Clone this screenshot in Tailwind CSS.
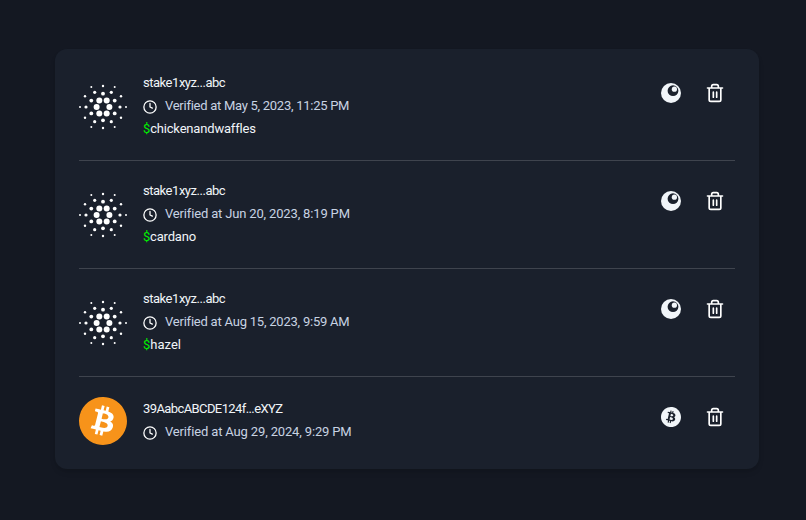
<!doctype html>
<html>
<head>
<meta charset="utf-8">
<script src="https://cdn.jsdelivr.net/npm/@tailwindcss/browser@4"></script>
</head>
<body class="m-0 h-[520px] w-[806px] overflow-hidden bg-[#141822] font-['Roboto',sans-serif]">
<svg width="0" height="0" class="absolute">
  <defs>
    <g id="ada" fill="#fff">
      <circle cx="20.3" cy="17.6" r="3"/><circle cx="27.7" cy="17.6" r="3"/><circle cx="17.6" cy="24" r="3"/><circle cx="30.4" cy="24" r="3"/><circle cx="20.3" cy="30.4" r="3"/><circle cx="27.7" cy="30.4" r="3"/>
      <circle cx="24" cy="10.7" r="1.9"/><circle cx="24" cy="37.3" r="1.9"/><circle cx="12.3" cy="17.6" r="1.9"/><circle cx="35.7" cy="17.6" r="1.9"/><circle cx="12.3" cy="30.4" r="1.9"/><circle cx="35.7" cy="30.4" r="1.9"/>
      <circle cx="7" cy="24" r="1.6"/><circle cx="41" cy="24" r="1.6"/><circle cx="15.7" cy="9.3" r="1.6"/><circle cx="32.3" cy="9.3" r="1.6"/><circle cx="15.7" cy="38.7" r="1.6"/><circle cx="32.3" cy="38.7" r="1.6"/>
      <circle cx="24" cy="3" r="1.2"/><circle cx="24" cy="45" r="1.2"/><circle cx="6" cy="13.3" r="1.2"/><circle cx="42" cy="13.3" r="1.2"/><circle cx="6" cy="34.7" r="1.2"/><circle cx="42" cy="34.7" r="1.2"/>
      <circle cx="1" cy="24" r="1"/><circle cx="47" cy="24" r="1"/><circle cx="12.3" cy="4" r="1"/><circle cx="35.7" cy="4" r="1"/><circle cx="12.3" cy="44" r="1"/><circle cx="35.7" cy="44" r="1"/>
    </g>
    <g id="clock" fill="none" stroke="#fff" stroke-width="2.2" stroke-linecap="round" stroke-linejoin="round">
      <circle cx="12" cy="12" r="10.5"/><path d="M12 6v6l4 2"/>
    </g>
    <g id="trash" fill="none" stroke="#fff" stroke-width="2" stroke-linecap="round" stroke-linejoin="round">
      <path d="M3 6h18M8 6V4a2 2 0 0 1 2-2h4a2 2 0 0 1 2 2v2M5 6v14a2 2 0 0 0 2 2h10a2 2 0 0 0 2-2V6M10 11v6M14 11v6"/>
    </g>
    <g id="moon">
      <circle cx="12" cy="12" r="10" fill="#f1f5f9"/><circle cx="14" cy="9.7" r="5.4" fill="#1a202c"/><circle cx="15.4" cy="8.2" r="2.6" fill="#f1f5f9"/>
    </g>
    <path id="btc" d="M23.638 14.904c-1.602 6.43-8.113 10.34-14.542 8.736C2.67 22.05-1.244 15.525.362 9.105 1.962 2.67 8.475-1.243 14.9.358c6.43 1.605 10.342 8.115 8.738 14.548v-.002zm-6.35-4.613c.24-1.59-.974-2.45-2.64-3.03l.54-2.153-1.315-.33-.525 2.107c-.345-.087-.705-.167-1.064-.25l.526-2.127-1.32-.33-.54 2.165c-.285-.067-.565-.132-.84-.2l-1.815-.45-.35 1.407s.975.225.955.236c.535.136.63.486.615.766l-1.477 5.92c-.075.166-.24.406-.614.314.015.02-.96-.24-.96-.24l-.66 1.51 1.71.426.93.242-.54 2.19 1.32.327.54-2.17c.36.1.705.19 1.05.273l-.51 2.154 1.32.33.545-2.19c2.24.427 3.93.257 4.64-1.774.57-1.637-.03-2.58-1.217-3.196.854-.193 1.5-.76 1.68-1.93h.01zm-3.01 4.22c-.404 1.64-3.157.75-4.05.53l.72-2.9c.896.23 3.757.67 3.33 2.37zm.41-4.24c-.37 1.49-2.662.735-3.405.55l.654-2.64c.744.18 3.137.524 2.75 2.084v.006z"/>
  </defs>
</svg>
<div class="p-[49px_47px_51px_55px]">
  <div class="flex h-[420px] w-[704px] flex-col rounded-xl bg-[#1a202c] px-6 shadow-md">
    <div class="flex h-[112px] items-start border-b border-[#3f444e] pt-[24px]">
      <svg class="mt-[10px] h-12 w-12 shrink-0" viewBox="0 0 48 48"><use href="#ada"/></svg>
      <div class="ml-4 flex-1 text-[13px] leading-5">
        <div class="tracking-[-0.47px] text-[#f1f5f9]">stake1xyz...abc</div>
        <div class="mt-[3px] flex items-center gap-2 text-[#c8d3e3]"><svg class="mt-[2px] h-[14px] w-[14px]" viewBox="0 0 24 24"><use href="#clock"/></svg><span class="tracking-[-0.27px]">Verified at May 5, 2023, 11:25 PM</span></div>
        <div class="mt-[3px] tracking-[-0.18px] text-[#f1f5f9]"><span class="text-[#00f000]">$</span>chickenandwaffles</div>
      </div>
      <div class="mr-[10px] flex items-center gap-[22px] pt-[8px]"><svg class="h-6 w-6" viewBox="0 0 24 24"><use href="#moon"/></svg><svg class="h-5 w-5" viewBox="0 0 24 24"><use href="#trash"/></svg></div>
    </div>
    <div class="flex h-[108px] items-start border-b border-[#3f444e] pt-[20px]">
      <svg class="mt-[10px] h-12 w-12 shrink-0" viewBox="0 0 48 48"><use href="#ada"/></svg>
      <div class="ml-4 flex-1 text-[13px] leading-5">
        <div class="tracking-[-0.47px] text-[#f1f5f9]">stake1xyz...abc</div>
        <div class="mt-[3px] flex items-center gap-2 text-[#c8d3e3]"><svg class="mt-[2px] h-[14px] w-[14px]" viewBox="0 0 24 24"><use href="#clock"/></svg><span class="tracking-[-0.16px]">Verified at Jun 20, 2023, 8:19 PM</span></div>
        <div class="mt-[3px] tracking-[-0.2px] text-[#f1f5f9]"><span class="text-[#00f000]">$</span>cardano</div>
      </div>
      <div class="mr-[10px] flex items-center gap-[22px] pt-[8px]"><svg class="h-6 w-6" viewBox="0 0 24 24"><use href="#moon"/></svg><svg class="h-5 w-5" viewBox="0 0 24 24"><use href="#trash"/></svg></div>
    </div>
    <div class="flex h-[108px] items-start border-b border-[#3f444e] pt-[20px]">
      <svg class="mt-[10px] h-12 w-12 shrink-0" viewBox="0 0 48 48"><use href="#ada"/></svg>
      <div class="ml-4 flex-1 text-[13px] leading-5">
        <div class="tracking-[-0.47px] text-[#f1f5f9]">stake1xyz...abc</div>
        <div class="mt-[3px] flex items-center gap-2 text-[#c8d3e3]"><svg class="mt-[2px] h-[14px] w-[14px]" viewBox="0 0 24 24"><use href="#clock"/></svg><span class="tracking-[-0.22px]">Verified at Aug 15, 2023, 9:59 AM</span></div>
        <div class="mt-[3px] text-[#f1f5f9]"><span class="text-[#00f000]">$</span>hazel</div>
      </div>
      <div class="mr-[10px] flex items-center gap-[22px] pt-[8px]"><svg class="h-6 w-6" viewBox="0 0 24 24"><use href="#moon"/></svg><svg class="h-5 w-5" viewBox="0 0 24 24"><use href="#trash"/></svg></div>
    </div>
    <div class="flex flex-1 items-start pt-[20px]">
      <svg class="h-12 w-12 shrink-0" viewBox="0 0 24 24"><circle cx="12" cy="12" r="10" fill="#fff"/><use href="#btc" fill="#f7931a"/></svg>
      <div class="ml-4 flex-1 pt-[2px] text-[13px] leading-5">
        <div class="tracking-[-0.6px] text-[#f1f5f9]">39AabcABCDE124f...eXYZ</div>
        <div class="mt-[3px] flex items-center gap-2 text-[#c8d3e3]"><svg class="mt-[2px] h-[14px] w-[14px]" viewBox="0 0 24 24"><use href="#clock"/></svg><span class="tracking-[-0.15px]">Verified at Aug 29, 2024, 9:29 PM</span></div>
      </div>
      <div class="mr-[10px] flex items-center gap-[22px] pt-[10px]"><svg class="mx-[2px] h-5 w-5" viewBox="0 0 24 24"><use href="#btc" fill="#f1f5f9"/></svg><svg class="h-5 w-5" viewBox="0 0 24 24"><use href="#trash"/></svg></div>
    </div>
  </div>
</div>
</body>
</html>
